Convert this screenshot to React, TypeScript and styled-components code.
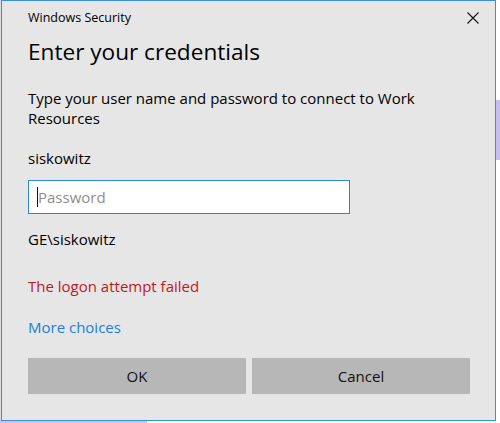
import styled, { createGlobalStyle } from "styled-components";

const GlobalStyle = createGlobalStyle`
  html, body {
    margin: 0;
    padding: 0;
  }
  body {
    font-family: "Open Sans", "Noto Sans", "Liberation Sans", sans-serif;
    color: #000;
  }
`;

// desktop behind the dialog: white page with a lilac selection strip
const Desktop = styled.div`
  width: 500px;
  height: 423px;
  overflow: hidden;
  background-color: #fff;
  background-image:
    linear-gradient(#c9c2f2, #c9c2f2),
    linear-gradient(#c6bff0, #c6bff0),
    linear-gradient(#dcdcdc, #dcdcdc);
  background-repeat: no-repeat;
  background-size: 147px 3px, 4px 60px, 1px 423px;
  background-position: 0 420px, 496px 100px, 0 0;
`;

const Dialog = styled.div`
  box-sizing: border-box;
  width: 495px;
  height: 421px;
  margin-left: 1px;
  border: 1px solid #3a8fdc;
  background: #e6e6e6;
  display: flex;
  flex-direction: column;
`;

const Header = styled.div`
  display: flex;
  justify-content: space-between;
  align-items: center;
  padding: 7px 16px 0 26px;
`;

const WindowTitle = styled.div`
  font-size: 12.5px;
  line-height: 20px;
  color: #000;
`;

const CloseButton = styled.button`
  border: 0;
  padding: 0;
  background: transparent;
  width: 12px;
  height: 12px;
  display: flex;
  align-items: center;
  justify-content: center;
`;

const Body = styled.div`
  display: flex;
  flex-direction: column;
  padding: 0 25px 0 26px;
`;

const Heading = styled.h1`
  margin: 9px 0 0;
  font-size: 22.6px;
  font-weight: 400;
  line-height: 30px;
  color: #000;
`;

const Text = styled.div<{ $gap: number; $tone?: "error" | "link" }>`
  margin-top: ${(p) => p.$gap}px;
  font-size: 15px;
  line-height: 20px;
  color: ${(p) =>
    p.$tone === "error" ? "#c5161d" : p.$tone === "link" ? "#1a80d9" : "#000"};
  cursor: ${(p) => (p.$tone === "link" ? "pointer" : "default")};
`;

const PasswordField = styled.div`
  box-sizing: border-box;
  margin-top: 12px;
  width: 322px;
  height: 34px;
  border: 1px solid #2a86d8;
  background: #fff;
  display: flex;
  align-items: center;
  padding-left: 8px;
`;

const Caret = styled.span`
  width: 1px;
  height: 20px;
  background: #111;
`;

const Placeholder = styled.span`
  font-size: 15px;
  line-height: 20px;
  color: #8e8e8e;
`;

const Actions = styled.div`
  margin-top: 21px;
  display: grid;
  grid-template-columns: 1fr 1fr;
  gap: 6px;
`;

const ActionButton = styled.button`
  height: 36px;
  border: 0;
  background: #b7b7b7;
  font-family: inherit;
  font-size: 15px;
  color: #111;
`;

export default function App() {
  return (
    <>
      <GlobalStyle />
      <Desktop>
        <Dialog>
          <Header>
            <WindowTitle>Windows Security</WindowTitle>
            <CloseButton aria-label="Close">
              <svg width="12" height="12" viewBox="0 0 12 12">
                <path d="M0.5 0.5 L11.5 11.5 M11.5 0.5 L0.5 11.5" stroke="#111" strokeWidth="1.1" />
              </svg>
            </CloseButton>
          </Header>
          <Body>
            <Heading>Enter your credentials</Heading>
            <Text $gap={21}>
              Type your user name and password to connect to Work Resources
            </Text>
            <Text $gap={20}>siskowitz</Text>
            <PasswordField>
              <Caret />
              <Placeholder>Password</Placeholder>
            </PasswordField>
            <Text $gap={15}>GE\siskowitz</Text>
            <Text $gap={27} $tone="error">
              The logon attempt failed
            </Text>
            <Text $gap={21} $tone="link">
              More choices
            </Text>
            <Actions>
              <ActionButton>OK</ActionButton>
              <ActionButton>Cancel</ActionButton>
            </Actions>
          </Body>
        </Dialog>
      </Desktop>
    </>
  );
}
